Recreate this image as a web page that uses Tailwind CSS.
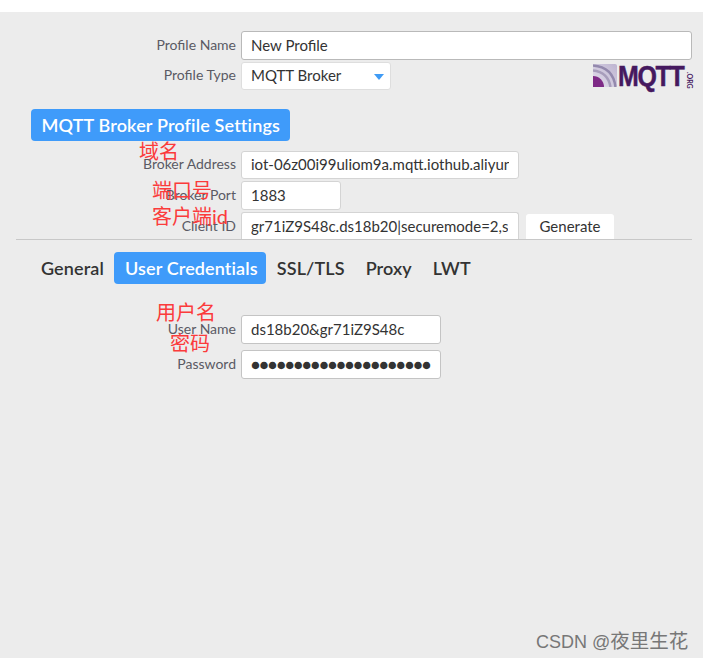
<!DOCTYPE html>
<html lang="en">
<head>
  <meta charset="UTF-8" />
  <title>MQTT Broker Profile</title>
  <script src="https://cdn.jsdelivr.net/npm/@tailwindcss/browser@4"></script>
</head>
<body class="bg-white font-['Lato','Noto_Sans_CJK_SC',sans-serif]">
  <div class="relative w-[703px] h-[660px] overflow-hidden">
    <div class="h-[646px] mt-3 bg-[#ececec]">

      <!-- Profile -->
      <div class="pt-[19px] flex flex-col gap-[2px]">
        <div class="flex items-center gap-[5px] h-[29px]">
          <span class="w-[236px] pb-[3px] text-right text-[14px] text-[#5a5a64]">Profile Name</span>
          <div class="w-[451px] h-[29px] bg-white border border-[#b9b9b9] rounded-[3px] pl-[9px] text-[15px] leading-[27px] text-[#333]">New Profile</div>
        </div>
        <div class="relative flex items-center gap-[5px] h-[28px]">
          <span class="w-[236px] pb-[3px] text-right text-[14px] text-[#5a5a64]">Profile Type</span>
          <div class="relative w-[150px] h-[28px] bg-white border border-[#dedede] rounded-[3px] pl-[9px] text-[15px] leading-[25px] text-[#333]">
            MQTT Broker
            <span class="absolute right-[6px] top-[11px] w-0 h-0 border-x-[5px] border-x-transparent border-t-[6px] border-t-[#3f9bf5]"></span>
          </div>
          <!-- mqtt.org logo -->
          <div class="absolute left-[593px] top-[2px] flex h-[24px] w-[100px]">
            <svg width="24" height="23" viewBox="0 0 24 23" class="shrink-0">
              <defs>
                <linearGradient id="logoBg" x1="0" y1="1" x2="1" y2="0">
                  <stop offset="0" stop-color="#e4dfec"/>
                  <stop offset="1" stop-color="#bdb4d0"/>
                </linearGradient>
              </defs>
              <rect width="24" height="23" rx="2" fill="url(#logoBg)"/>
              <path d="M0 1.5 Q20 3 22.5 23" fill="none" stroke="#9389ad" stroke-width="2.5"/>
              <path d="M0 6.5 Q15 8 17.5 23" fill="none" stroke="#a79dbb" stroke-width="2.5"/>
              <path d="M0 12 A11 11 0 0 1 11 23 L0 23 Z" fill="#7e2a86"/>
            </svg>
            <span class="ml-[1px] -mt-[2px] w-[78px] h-[29px] shrink-0 font-['Liberation_Sans'] font-bold text-[29px] leading-[28px] tracking-[-1.5px] scale-x-[0.86] origin-left whitespace-nowrap text-[#45195f] [-webkit-text-stroke:0.5px_#45195f]">MQTT</span>
            <span class="absolute right-0 top-[8px] text-[7px] leading-[7px] text-[#45195f] [writing-mode:vertical-rl] font-bold">.ORG</span>
          </div>
        </div>
      </div>

      <!-- Section header -->
      <div class="ml-[31px] mt-[19px] w-[259px] h-[32px] bg-[#3f9bfa] rounded-[4px] text-white text-[18px] tracking-[0.15px] font-semibold leading-[32px] pl-[10.5px] whitespace-nowrap">MQTT Broker Profile Settings</div>

      <!-- Broker -->
      <div class="mt-[10px] flex flex-col gap-[2px]">
        <div class="flex items-center gap-[5px] h-[28px]">
          <span class="w-[236px] pb-[3px] text-right text-[14px] text-[#5a5a64]">Broker Address</span>
          <div class="w-[278px] h-[28px] bg-white border border-[#d4d4d4] rounded-[3px] pl-[9px] text-[15px] leading-[25px] text-[#333]">
            <div class="w-[258px] overflow-hidden whitespace-nowrap">iot-06z00i99uliom9a.mqtt.iothub.aliyuncs.com</div>
          </div>
        </div>
        <div class="flex items-center gap-[5px] h-[29px]">
          <span class="w-[236px] pb-[3px] text-right text-[14px] text-[#5a5a64]">Broker Port</span>
          <div class="w-[100px] h-[29px] bg-white border border-[#d4d4d4] rounded-[3px] pl-[9px] text-[15px] leading-[27px] text-[#333]">1883</div>
        </div>
        <div class="flex items-center gap-[5px] h-[27px]">
          <span class="w-[236px] pb-[1px] text-right text-[14px] text-[#5a5a64]">Client ID</span>
          <div class="w-[278px] h-[27px] bg-white border border-b-0 border-[#d4d4d4] rounded-t-[3px] pl-[9px] text-[15px] leading-[26px] text-[#333]">
            <div class="w-[257px] overflow-hidden whitespace-nowrap">gr71iZ9S48c.ds18b20|securemode=2,signmethod=hmacsha256</div>
          </div>
          <div class="ml-[2px] mt-[2px] w-[88px] h-[25px] bg-white rounded-t-[3px] text-center text-[15px] leading-[25px] text-[#333]">Generate</div>
        </div>
      </div>
      <div class="ml-[16px] w-[676px] h-[1px] bg-[#c8c8c8]"></div>

      <!-- Tabs -->
      <div class="mt-[12px] ml-[31px] flex items-center h-[32px] text-[18px] tracking-[0.12px] font-semibold text-[#333]">
        <span class="pl-[10px] pr-[10px]">General</span>
        <span class="pl-[11px] pr-[8px] h-[32px] leading-[32px] bg-[#3f9bfa] text-white rounded-[4px]">User Credentials</span>
        <span class="ml-[11px]">SSL/TLS</span>
        <span class="ml-[21px]">Proxy</span>
        <span class="ml-[21px]">LWT</span>
      </div>

      <!-- Credentials -->
      <div class="mt-[31px] flex flex-col gap-[6px]">
        <div class="flex items-center gap-[5px] h-[29px]">
          <span class="w-[236px] pb-[3px] text-right text-[14px] text-[#5a5a64]">User Name</span>
          <div class="w-[200px] h-[29px] bg-white border border-[#c4c4c4] rounded-[3px] pl-[9px] text-[15px] leading-[27px] text-[#333]">ds18b20&amp;gr71iZ9S48c</div>
        </div>
        <div class="flex items-center gap-[5px] h-[29px]">
          <span class="w-[236px] pb-[3px] text-right text-[14px] text-[#5a5a64]">Password</span>
          <div class="w-[200px] h-[29px] bg-white border border-[#c4c4c4] rounded-[3px] pl-[9px] text-[15px] leading-[27px] text-[#333] tracking-[-0.45px] whitespace-nowrap">●●●●●●●●●●●●●●●●●●●●●</div>
        </div>
      </div>
    </div>

    <!-- red annotations over the form -->
    <span class="absolute left-[139px] top-[139px] text-[20px] leading-[24px] text-[#fb3b3b]">域名</span>
    <span class="absolute left-[152px] top-[178px] text-[20px] leading-[24px] text-[#fb3b3b]">端口号</span>
    <span class="absolute left-[152px] top-[204px] text-[20px] leading-[24px] text-[#fb3b3b]">客户端id</span>
    <span class="absolute left-[156px] top-[300px] text-[20px] leading-[24px] text-[#fb3b3b]">用户名</span>
    <span class="absolute left-[170px] top-[331px] text-[20px] leading-[24px] text-[#fb3b3b]">密码</span>

    <!-- watermark -->
    <span class="absolute left-[536px] top-[629px] font-['Liberation_Sans','Noto_Sans_CJK_SC'] text-[18px] leading-[24px] text-[#777] whitespace-nowrap">CSDN @<span class="text-[19.5px]">夜里生花</span></span>
  </div>
</body>
</html>
